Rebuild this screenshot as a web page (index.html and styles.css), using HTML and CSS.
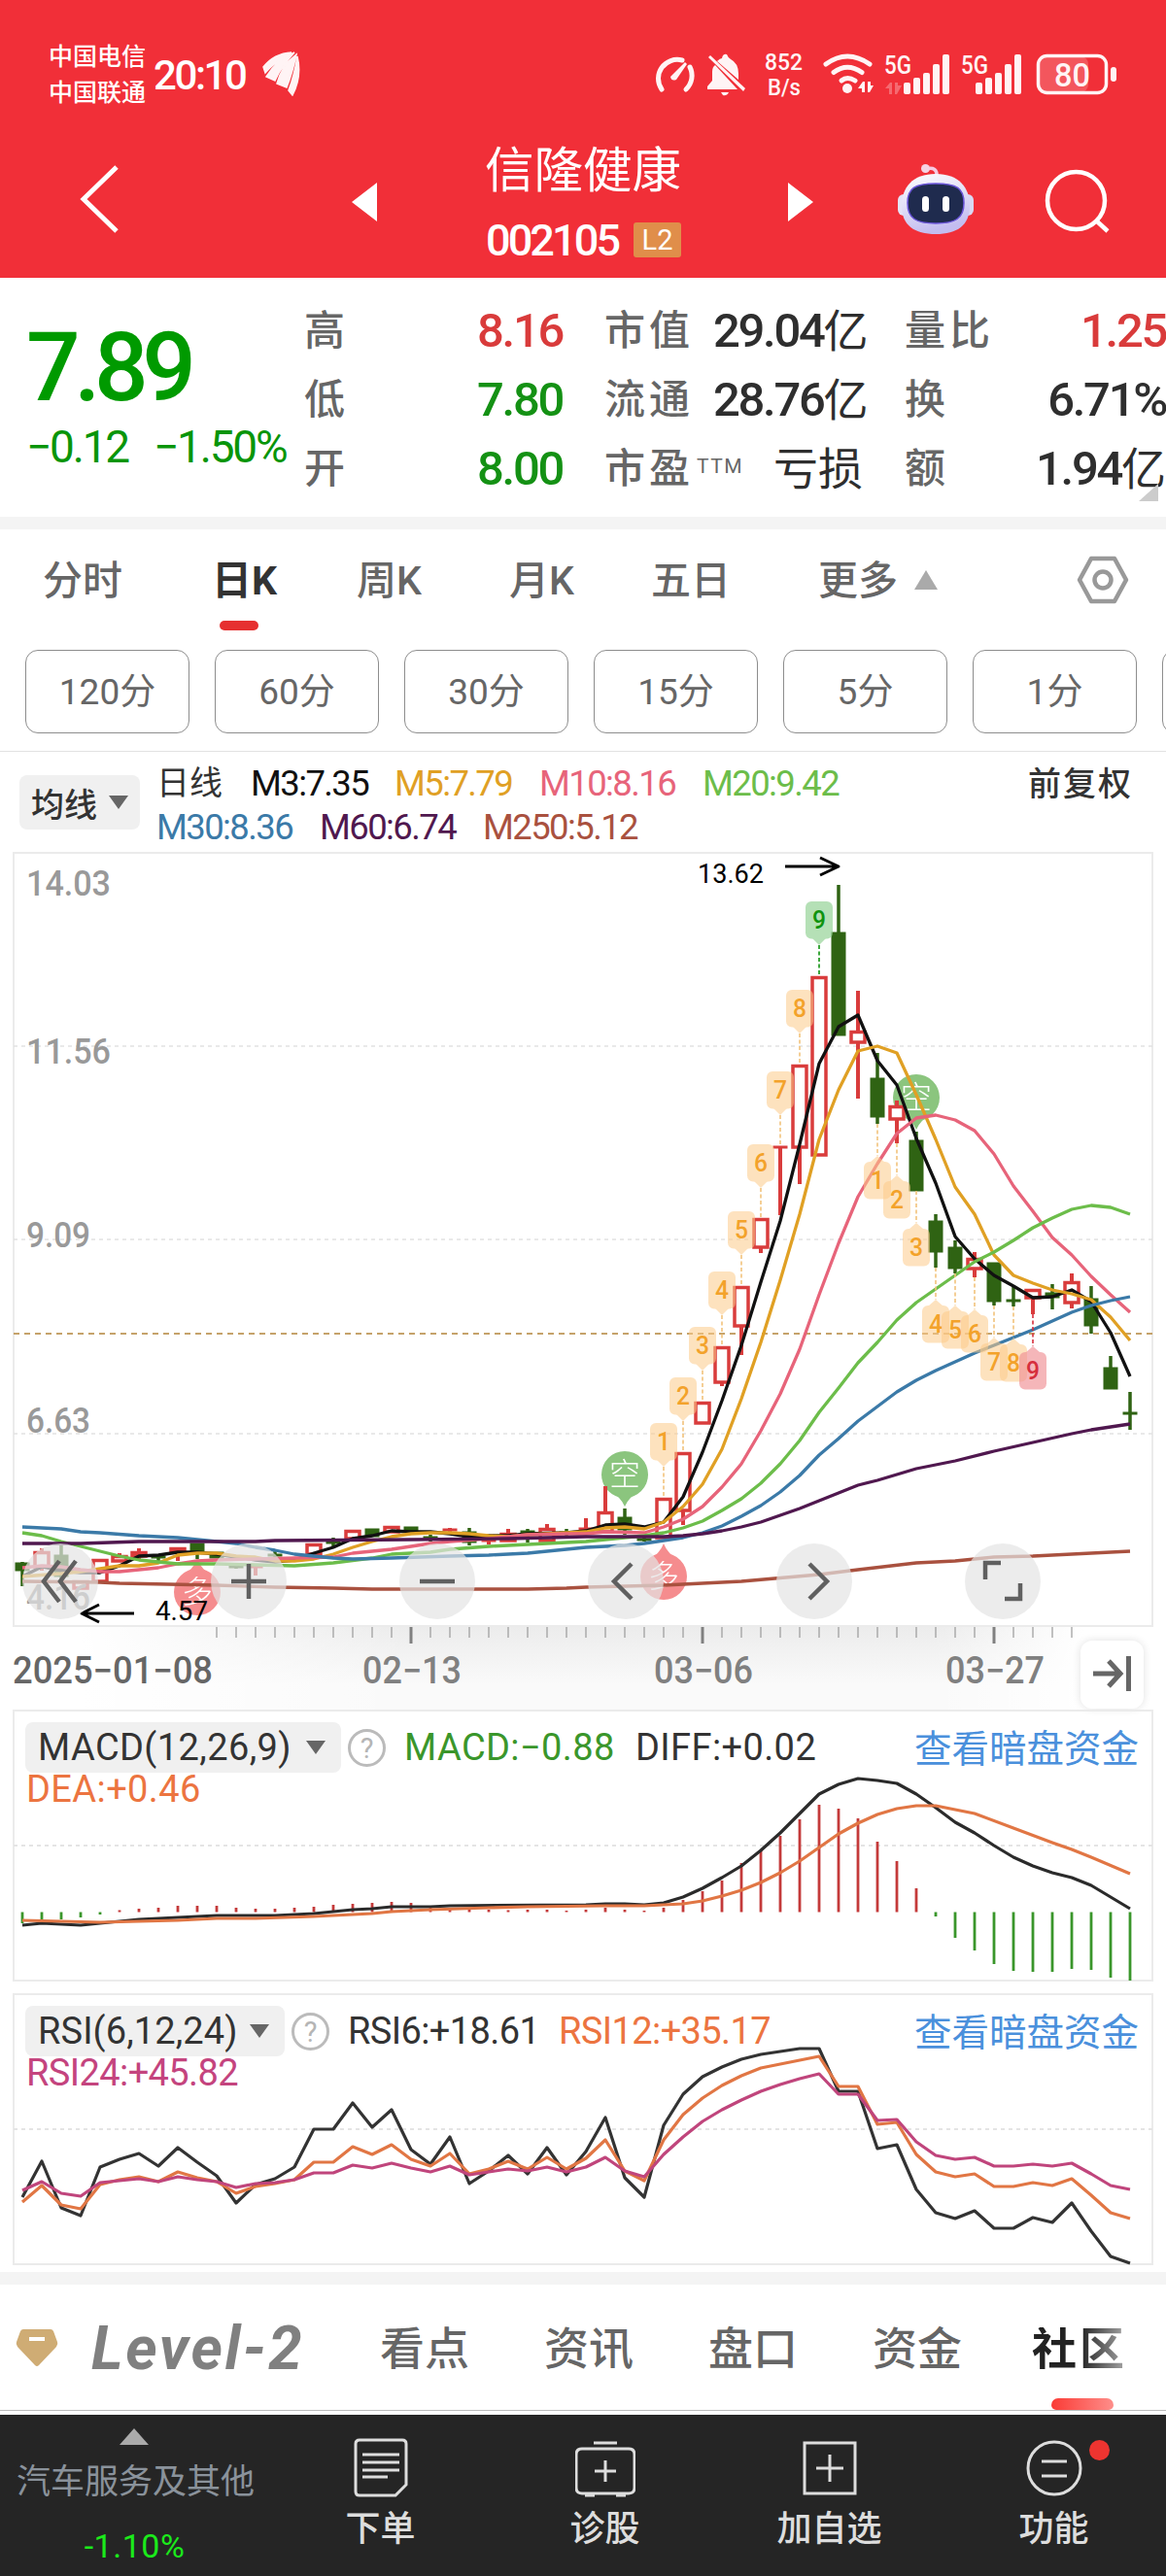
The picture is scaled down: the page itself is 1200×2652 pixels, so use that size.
FILE: index.html
```html
<!DOCTYPE html>
<html lang="zh-CN">
<head>
<meta charset="utf-8">
<title>信隆健康 002105</title>
<link rel="stylesheet" href="styles.css">
</head>
<body>
<header class="top">
  <div class="status">
    <div class="carriers"><span>中国电信</span><span>中国联通</span></div>
    <span class="clock">20:10</span>
    <svg class="brand" width="40" height="46" viewBox="271 54 40 46" fill="#fff4f5"><path d="M272 70Q283 56 301 55Q284 64 274 76ZM275 80Q286 62 304 55Q290 70 284 84ZM286 87Q291 68 306 57Q302 76 296 91ZM298 94Q304 78 307 59Q312 80 302 99Z" stroke="#fff4f5" stroke-width="1.500"/></svg>
    <svg class="sys" width="500" height="60" viewBox="660 46 500 60">
      <g fill="none" stroke="#fff4f5" stroke-width="5" stroke-linecap="round">
        <path d="M681 92A19.500 19.500 0 0 1 702 62M710 69A19.500 19.500 0 0 1 706 92"/>
        <path d="M850 66Q872 50 895 66M858 74.500Q872 64 887 74.500"/>
        <path d="M866 83Q872 78 880 83"/>
      </g>
      <g fill="#fff4f5">
        <path d="M690 79L705 64L707 66L696 82Q691 84 690 79Z"/>
        <path d="M728 92V89L733 83V74Q733 69 736 67L759 92ZM738 63Q741 60 743 60Q744 55 748 56Q749 59 752 61Q760 65 760 76V82ZM742 95H750Q748 99 744 98Z"/>
        <path d="M729 59L731 57L767 91L765 94Z"/>
        <circle cx="872" cy="91" r="5"/>
        <path d="M883 91L888 84H890V95H887V91ZM893 84H896V88H899L895 95H893Z"/>
        <rect x="930" y="85" width="7" height="12" rx="2"/><rect x="940" y="80" width="7" height="17" rx="2"/><rect x="950" y="75" width="7" height="22" rx="2"/><rect x="960" y="66" width="7" height="31" rx="2"/><rect x="970" y="56" width="7" height="41" rx="2"/>
        <rect x="1004" y="85" width="7" height="12" rx="2"/><rect x="1014" y="80" width="7" height="17" rx="2"/><rect x="1024" y="75" width="7" height="22" rx="2"/><rect x="1034" y="66" width="7" height="31" rx="2"/><rect x="1044" y="56" width="7" height="41" rx="2"/>
        <path d="M911 91L916 85H918V97H915V91ZM921 85H924V88H928L923 97H921Z" opacity=".3"/>
        <rect x="1069" y="58" width="51" height="37" rx="8" opacity=".2"/>
        <rect x="1143" y="69" width="6" height="15" rx="3"/>
      </g>
      <rect x="1068.500" y="57.500" width="70" height="38" rx="9" fill="none" stroke="#fff4f5" stroke-width="3.500"/>
      <g class="sys-text">
        <text x="787" y="72" font-size="24" textLength="39" lengthAdjust="spacingAndGlyphs">852</text>
        <text x="790" y="98" font-size="24" textLength="34" lengthAdjust="spacingAndGlyphs">B/s</text>
        <text x="910" y="76" font-size="26" textLength="28" lengthAdjust="spacingAndGlyphs">5G</text>
        <text x="989" y="76" font-size="26" textLength="28" lengthAdjust="spacingAndGlyphs">5G</text>
        <text x="1085" y="89" font-size="34" textLength="37" lengthAdjust="spacingAndGlyphs">80</text>
      </g>
    </svg>
  </div>
  <div class="nav">
    <svg class="back" width="46" height="76" viewBox="80 168 46 76" fill="none" stroke="#fff" stroke-width="5"><path d="M120 173L86 206L120 239"/></svg>
    <svg class="prev" width="26" height="40" viewBox="0 0 26 40"><path d="M26 0V40L0 20Z" fill="#fff"/></svg>
    <div class="name">
      <h1>信隆健康</h1>
      <div class="code"><span>002105</span><b>L2</b></div>
    </div>
    <svg class="next" width="26" height="40" viewBox="0 0 26 40"><path d="M0 0V40L26 20Z" fill="#fff"/></svg>
    <svg class="robot" width="80" height="74" viewBox="923 168 80 74">
      <defs><linearGradient id="shell" x1="0" y1="0" x2="0.300" y2="1"><stop offset="0" stop-color="#fff"/><stop offset=".6" stop-color="#dcd9f5"/><stop offset="1" stop-color="#c3bdf0"/></linearGradient></defs>
      <path d="M953 174Q965 171 964 182" fill="none" stroke="#f6c9e0" stroke-width="3.500"/>
      <circle cx="952.500" cy="173.500" r="4.500" fill="#f5d3e4"/>
      <rect x="924" y="200" width="14" height="22" rx="6" fill="#e4e3f7"/><rect x="988" y="200" width="14" height="22" rx="6" fill="#d9d8f3"/>
      <path d="M963 179C987 179 998 193 998 212C998 232 985 241 963 241C941 241 928 232 928 212C928 193 939 179 963 179Z" fill="url(#shell)"/>
      <path d="M963 189C985 189 992 194 992 209C992 225 983 230 963 230C943 230 934 225 934 209C934 194 941 189 963 189Z" fill="#1f2b4e" stroke="#6a55d8" stroke-width="1.500"/>
      <rect x="949" y="202" width="7" height="16" rx="3.500" fill="#fff"/><rect x="970" y="202" width="7" height="16" rx="3.500" fill="#fff"/>
    </svg>
    <svg class="search" width="68" height="68" viewBox="1074 174 68 68" fill="none" stroke="#fff" stroke-width="4.500"><circle cx="1107.500" cy="206.500" r="29.500"/><path d="M1128 227L1140 238"/></svg>
  </div>
</header>

<section class="quote">
  <div class="price">
    <strong>7.89</strong>
    <div class="change"><span>−0.12</span><span>−1.50%</span></div>
  </div>
  <dl class="stats">
    <dt>高</dt><dd class="up">8.16</dd><dt>市值</dt><dd>29.04<i>亿</i></dd><dt>量比</dt><dd class="up">1.25</dd>
    <dt>低</dt><dd class="down">7.80</dd><dt>流通</dt><dd>28.76<i>亿</i></dd><dt>换</dt><dd>6.71%</dd>
    <dt>开</dt><dd class="down">8.00</dd><dt>市盈<sup>TTM</sup></dt><dd><i>亏损</i></dd><dt>额</dt><dd>1.94<i>亿</i></dd>
  </dl>
  <span class="corner"></span>
</section>

<nav class="tabs">
  <span>分时</span><span class="active">日K</span><span>周K</span><span>月K</span><span>五日</span><span class="more">更多<svg width="24" height="20"><path d="M12 0L24 20H0Z" fill="#aaa"/></svg></span>
  <svg class="hex" width="54" height="54" viewBox="1108 570 54 54" fill="none" stroke="#999" stroke-width="4.500" stroke-linejoin="round"><path d="M1123 575H1147L1159 597L1147 619H1123L1111 597Z"/><circle cx="1135" cy="597" r="8.500"/></svg>
</nav>
<div class="periods"><span>120分</span><span>60分</span><span>30分</span><span>15分</span><span>5分</span><span>1分</span><span></span></div>

<section class="legend">
  <button class="chip ma">均线<i></i></button>
  <div class="lines">
    <p><span class="day">日线</span><span class="c3">M3:7.35</span><span class="c5">M5:7.79</span><span class="c10">M10:8.16</span><span class="c20">M20:9.42</span></p>
    <p><span class="c30">M30:8.36</span><span class="c60">M60:6.74</span><span class="c250">M250:5.12</span></p>
  </div>
  <span class="adjust">前复权</span>
</section>

<section class="kline">
  <svg id="kline" width="1200" height="800" viewBox="0 876 1200 800"></svg>
  <div class="tools">
    <span><svg viewBox="-39 -39 78 78"><path d="M-1 -21L-17 0L-1 21M16 -21L0 0L16 21"/></svg></span>
    <span><svg viewBox="-39 -39 78 78"><path d="M-18 0H18M0 -18V18"/></svg></span>
    <span><svg viewBox="-39 -39 78 78"><path d="M-18 0H18"/></svg></span>
    <span><svg viewBox="-39 -39 78 78"><path d="M6 -18L-12 0L6 18"/></svg></span>
    <span><svg viewBox="-39 -39 78 78"><path d="M-5 -18L13 0L-5 18"/></svg></span>
    <span><svg viewBox="-39 -39 78 78"><path d="M-2 -19H-18V-2M2 18H18V2"/></svg></span>
  </div>
</section>

<section class="axis">
  <svg id="axis" width="1200" height="85" viewBox="0 1675 1200 85"></svg>
  <span class="latest"><svg width="64" height="68" viewBox="1112 1690 64 68" fill="none" stroke="#666" stroke-width="5"><path d="M1125 1724H1152M1141 1711L1153 1724L1141 1737M1161.500 1706V1742"/></svg></span>
</section>

<section class="panel macd">
  <svg class="plot" id="macd" width="1174" height="280" viewBox="13 1760 1174 280"></svg>
  <div class="head">
    <button class="chip">MACD(12,26,9)<i></i></button><em>?</em>
    <span class="green">MACD:−0.88</span><span>DIFF:+0.02</span><a>查看暗盘资金</a>
  </div>
  <p class="orange">DEA:+0.46</p>
</section>
<section class="panel rsi">
  <svg class="plot" id="rsi" width="1174" height="280" viewBox="13 2052 1174 280"></svg>
  <div class="head">
    <button class="chip">RSI(6,12,24)<i></i></button><em>?</em>
    <span>RSI6:+18.61</span><span class="orange">RSI12:+35.17</span><a>查看暗盘资金</a>
  </div>
  <p class="magenta">RSI24:+45.82</p>
</section>

<nav class="info">
  <svg class="gem" width="44" height="40" viewBox="0 0 44 40"><path d="M8 1H36Q38 1 39 3L43 14Q44 16 42 19L24 38Q22 40 20 38L2 19Q0 16 1 14L5 3Q6 1 8 1Z" fill="#cfac74"/><rect x="14" y="9" width="16" height="4" fill="#fff"/></svg>
  <span class="level">Level-2</span><span>看点</span><span>资讯</span><span>盘口</span><span>资金</span><span class="current">社区</span>
</nav>

<footer class="dock">
  <div class="sector"><svg width="30" height="17"><path d="M15 0L30 17H0Z" fill="#aaa"/></svg><span>汽车服务及其他</span><b>-1.10%</b></div>
  <div class="act order"><svg viewBox="-31 -31 62 62"><path d="M-22 -29H22Q26 -29 26 -25V17L15 28H-22Q-26 28 -26 24V-25Q-26 -29 -22 -29ZM-19 -14H19M-19 -6H19M-19 2H19M-19 9H7"/></svg>下单</div>
  <div class="act diag"><svg viewBox="-31 -31 62 62"><path d="M-24 -20H24Q30 -20 30 -14V20Q30 26 24 26H-24Q-30 26 -30 20V-14Q-30 -20 -24 -20ZM-12 -26H12M-11 3H11M0 -8V14M-21 28H-11M11 28H21"/></svg>诊股</div>
  <div class="act add"><svg viewBox="-31 -31 62 62"><path d="M-26 -26H26V26H-26ZM-14 0H14M0 -14V14"/></svg>加自选</div>
  <div class="act func"><svg viewBox="-31 -31 62 62"><path d="M-13 -7H13M-13 8H13"/><circle r="27"/></svg>功能<i></i></div>
</footer>
<script src="chart.js"></script>
</body>
</html>
```
FILE: styles.css
```css
* { box-sizing: border-box; margin: 0; padding: 0; }
body { width: 1200px; height: 2652px; overflow: hidden; background: #fff; color: #333; font-family: Roboto, "Noto Sans CJK SC", sans-serif; display: flex; flex-direction: column; }
i, em { font-style: normal; }
svg { flex: none; }
header, section, nav, footer, .periods { flex: none; }
text { font-family: Roboto, "Noto Sans CJK SC", sans-serif; }

.top { height: 286px; background: #f12f38; color: #fff; }
.status { height: 130px; padding: 40px 0 0 50px; display: flex; align-items: flex-start; }
.carriers { display: flex; flex-direction: column; width: 108px; font-size: 25px; font-weight: 500; line-height: 37px; }
.clock { width: 112px; font-size: 42px; font-weight: 500; line-height: 48px; padding-top: 14px; letter-spacing: -2.4px; }
.brand { margin-top: 13px; }
.sys { margin: 6px 0 0 350px; }
.sys-text { fill: #fff4f5; font-weight: 500; }
.nav { display: flex; align-items: flex-start; height: 156px; }
.back { margin: 37px 0 0 80px; }
.prev { margin: 58px 0 0 236px; }
.name { width: 202px; margin: 16px 0 0 111px; }
.name h1 { font-size: 50.5px; font-weight: 400; line-height: 60px; white-space: nowrap; }
.code { display: flex; align-items: center; justify-content: space-between; margin-top: 16px; height: 50px; padding-left: 1px; }
.code span { font-size: 45px; font-weight: 500; letter-spacing: -2.9px; }
.code b { width: 49px; height: 36px; border-radius: 3px; background: #e08e4a; font-size: 29px; font-weight: 400; line-height: 36px; text-align: center; }
.next { margin: 58px 0 0 110px; }
.robot { margin: 38px 0 0 86px; }
.search { margin: 44px 0 0 71px; }

.quote { height: 259px; border-bottom: 13px solid #f4f4f4; display: flex; position: relative; }
.price { width: 313px; padding-left: 27px; color: #099509; white-space: nowrap; }
.price strong { display: block; font-size: 98px; font-weight: 500; line-height: 110px; margin-top: 38px; letter-spacing: -6.5px; color: #009a00; }
.change { display: flex; font-size: 46px; line-height: 54px; letter-spacing: -2.2px; margin-top: -1px; }
.change span:first-child { width: 131px; }
.stats { display: grid; grid-template-columns: 84px 182px 155px 154px 110px 202px; grid-template-rows: 71px 71px 71px; padding-top: 19px; line-height: 71px; }
.stats dt { font-size: 42px; font-weight: 500; color: #666; white-space: nowrap; letter-spacing: 4px; }
.stats dt:nth-of-type(3n+2), .stats dt:nth-of-type(3n) { padding-left: 43px; }
.stats dt sup { font-size: 21px; font-weight: 400; vertical-align: 10px; line-height: 0; margin-left: 3px; letter-spacing: 1.5px; }
.stats dd { font-size: 49px; font-weight: 500; letter-spacing: -2.3px; text-align: right; white-space: nowrap; color: #2e2e2e; }
.stats dd i { font-size: 46px; font-weight: 400; letter-spacing: 0; }
.stats .up { color: #d93b3b; }
.stats .down { color: #149114; }
.corner { position: absolute; right: 8px; bottom: 16px; border: solid transparent; border-width: 0 0 18px 20px; border-bottom-color: #ccc; }

.tabs { height: 124px; display: flex; align-items: flex-start; padding: 25px 0 0 44px; font-size: 41px; font-weight: 500; line-height: 56px; color: #666; }
.tabs span { height: 79px; white-space: nowrap; }
.tabs span:nth-child(1) { width: 174px; }
.tabs span:nth-child(2) { width: 149px; position: relative; font-weight: 700; color: #333; }
.tabs span:nth-child(3) { width: 157px; }
.tabs span:nth-child(4) { width: 146px; }
.tabs span:nth-child(5) { width: 172px; }
.tabs .more { width: 266px; display: flex; gap: 17px; }
.more svg { margin-top: 17px; }
.tabs .active::after { content: ""; position: absolute; left: 8px; top: 69px; width: 40px; height: 10px; border-radius: 5px; background: #e63030; }
.periods { height: 105px; border-bottom: 1px solid #e2e2e2; padding-left: 26px; display: flex; gap: 26px; overflow: hidden; }
.periods span { flex: 0 0 169px; height: 86px; border: 1px solid #8d8d8d; border-radius: 13px; font-size: 37px; line-height: 85px; text-align: center; color: #666; }

.legend { height: 102px; display: flex; align-items: flex-start; padding-left: 20px; }
.chip { display: flex; align-items: center; border: 0; border-radius: 8px; background: #f0f0f0; color: #333; font-family: inherit; white-space: nowrap; }
.chip i { margin-left: auto; border: 10px solid transparent; border-top: 14px solid #666; border-bottom: 0; }
.ma { width: 124px; height: 56px; margin-top: 24px; padding: 0 12px; font-size: 34px; font-weight: 500; }
.lines { width: 914px; padding: 10px 0 0 17px; font-size: 36.5px; line-height: 45px; letter-spacing: -1.6px; }
.lines p { display: flex; gap: 28px; }
.lines p + p span { width: 140px; }
.lines p + p .c250 { width: 160px; }
.lines .day { width: 71px; font-size: 34px; letter-spacing: 0; }
.c3 { width: 120px; } .c5 { width: 121px; }
.c10, .c20 { width: 140px; }
.c3 { color: #111; } .c5 { color: #e0a024; } .c10 { color: #e7647a; } .c20 { color: #6cbd4a; }
.c30 { color: #3b7aa8; } .c60 { color: #50184f; } .c250 { color: #a9513f; }
.legend .lines .c3 { margin-left: -2px; }
.adjust { font-size: 34px; font-weight: 500; line-height: 56px; margin-top: 5px; white-space: nowrap; letter-spacing: 2px; }

.kline { height: 799px; position: relative; }
.kline > svg { display: block; }
.tools { position: absolute; left: 23px; top: 713px; display: flex; gap: 116px; }
.tools span { width: 78px; height: 78px; border-radius: 39px; background: rgba(228,228,228,.7); }
.tools svg { display: block; fill: none; stroke: #606060; stroke-width: 4.5; }
.axis { height: 85px; position: relative; background: linear-gradient(90deg, #fff 7%, rgba(255,255,255,0) 35%, rgba(255,255,255,0) 80%, #fff 93%), linear-gradient(#ececec, #fafafa 70%); }
.latest { position: absolute; left: 1112px; top: 14px; width: 65px; height: 70px; border-radius: 12px; background: #fff; box-shadow: 0 0 8px rgba(0,0,0,.12); }

.panel { position: relative; width: 1174px; height: 280px; margin-left: 13px; border: 2px solid #ebebeb; font-size: 38px; }
.macd { margin-bottom: 12px; letter-spacing: .4px; }
.rsi { letter-spacing: -.6px; }
.plot { position: absolute; left: -2px; top: -2px; }
.head { position: relative; display: flex; align-items: center; padding: 11px 13px 0 11px; height: 63px; }
.head .chip { width: 325px; height: 52px; padding: 0 16px 0 13px; font-size: 38px; letter-spacing: .4px; }
.head em { width: 39px; height: 39px; margin: 0 19px 0 7px; border: 3px solid #bbb; border-radius: 50%; color: #b5b5b5; font-size: 29px; line-height: 34px; text-align: center; letter-spacing: 0; }
.head span { white-space: nowrap; }
.head span:nth-of-type(1) { width: 238px; }
.rsi .head .chip { width: 267px; letter-spacing: .1px; }
.rsi .head span:nth-of-type(1) { width: 217px; }
.head a { margin-left: auto; margin-top: -4px; font-size: 38.5px; letter-spacing: 0; color: #4a90dc; }
.panel p { position: relative; padding-left: 12px; line-height: 40px; margin-top: -3px; }
.green { color: #3a962b; } .orange { color: #ec7440; } .magenta { color: #c4447e; }

.info { height: 147px; border-top: 13px solid #f4f4f4; margin-top: 7px; display: flex; align-items: flex-start; padding: 45px 0 0 16px; color: #666; font-size: 46px; font-weight: 500; line-height: 44px; box-shadow: inset 0 -4px 0 #fff, inset 0 -5px 0 #bbb; }
.info span { width: 169px; margin-top: -1px; white-space: nowrap; }
.info .level { width: 331px; padding-left: 34px; color: #808080; font-size: 62px; font-style: italic; font-weight: 700; letter-spacing: 2.6px; }
.info .current { position: relative; width: 110px; margin-left: -5px; font-weight: 700; background: linear-gradient(90deg, #222 45%, #ccc); background-clip: text; color: transparent; letter-spacing: 3px; }
.info .current::after { content: ""; position: absolute; left: 20px; top: 73px; width: 64px; height: 12px; border-radius: 7px 7px 5px 5px; background: linear-gradient(90deg, #fa3b36, #fe8e8a); }

.dock { height: 166px; background: #252525; display: flex; color: #ddd; }
.sector { width: 276px; padding: 14px 0 0 17px; display: flex; flex-direction: column; align-items: center; color: #8a929b; font-size: 35px; line-height: 44px; white-space: nowrap; }
.sector span { margin-top: 17px; width: 245px; margin-left: -14px; }
.sector b { margin-top: 21px; margin-left: -16px; color: #1bea1b; font-size: 34px; font-weight: 400; line-height: 44px; letter-spacing: .5px; }
.sector svg { margin-left: -18px; }
.act { position: relative; width: 231px; padding-top: 24px; display: flex; flex-direction: column; align-items: center; font-size: 36px; font-weight: 500; line-height: 56px; }
.act svg { width: 62px; height: 62px; margin-bottom: 4px; fill: none; stroke: #ddd; stroke-width: 3; }
.act i { position: absolute; right: 58px; top: 26px; width: 21px; height: 21px; border-radius: 50%; background: #ee3430; }
```
FILE: chart.js
```js
const FIRST_X = 23, STEP = 20;
const RED = '#d93c3c', GREEN = '#2f6313';

const tag = (name, attrs, body = '') =>
  `<${name} ${Object.entries(attrs).map(([k, v]) => `${k}="${v}"`).join(' ')}>${body}</${name}>`;
const line = (x1, y1, x2, y2, stroke, width, dash) =>
  tag('line', { x1, y1, x2, y2, stroke, 'stroke-width': width, 'stroke-dasharray': dash || 'none' });
const path = (d, stroke, width) =>
  tag('path', { d, stroke, fill: 'none', 'stroke-width': width, 'stroke-linejoin': 'round' });
const label = (x, y, size, fill, len, body, weight = 400) =>
  tag('text', { x, y, 'font-size': size, fill, textLength: len, lengthAdjust: 'spacingAndGlyphs', 'font-weight': weight }, body);
const pairs = (text) => 'M' + text.trim().split(/\s+/).join('L');
const series = (ys) => 'M' + ys.map((y, i) => `${FIRST_X + STEP * i},${y}`).join('L');

/* candles: x, high, low, body top, body bottom, rising */
const candles = [
  [23,1608,1633,1609,1617,0],[43,1594,1617,1598,1613,1],[63,1591,1625,1601,1623,0],[83,1627,1636,1628,1635,1],
  [103,1606,1629,1606,1628,1],[123,1599,1608,1602,1607,1],[143,1594,1606,1598,1602,1],[163,1602,1607,1602,1604,0],
  [183,1593,1607,1594,1598,1],[203,1589,1605,1589,1597,0],[223,1598,1604,1598,1604,0],[243,1610,1615,1612,1614,0],
  [263,1611,1622,1612,1614,1],[283,1596,1604,1600,1602,0],[303,1605,1608,1605,1607,1],[323,1589,1606,1590,1600,1],
  [343,1583,1593,1587,1589,0],[363,1575,1585,1576,1584,1],[383,1574,1582,1574,1582,0],[403,1571,1578,1572,1577,1],
  [423,1572,1576,1572,1576,0],[443,1580,1587,1582,1584,0],[463,1573,1577,1574,1576,1],[483,1573,1591,1577,1588,0],
  [503,1583,1590,1585,1587,1],[523,1574,1587,1579,1586,1],[543,1574,1588,1576,1578,0],[563,1569,1587,1574,1586,1],
  [583,1574,1581,1577,1579,0],[603,1563,1578,1573,1576,1],[623,1530,1577,1557,1577,1],[643,1553,1580,1562,1575,0],
  [663,1583,1587,1584,1586,0],[683,1542,1583,1543,1583,1],[703,1495,1570,1496,1555,1],[723,1443,1466,1444,1465,1],
  [743,1386,1427,1387,1423,1],[763,1324,1395,1325,1365,1],[783,1254,1290,1255,1284,1],[803,1180,1251,1180,1182,1],
  [823,1096,1219,1097,1181,1],[843,1005,1190,1006,1189,1],[863,911,1066,960,1066,0],[883,1020,1131,1062,1073,1],
  [903,1084,1157,1110,1150,0],[923,1133,1177,1139,1152,1],[943,1165,1226,1174,1226,0],[963,1250,1305,1257,1289,0],
  [983,1277,1311,1284,1306,0],[1003,1289,1315,1296,1306,1],[1023,1300,1344,1300,1340,0],[1043,1325,1345,1338,1340,0],
  [1063,1327,1353,1328,1336,1],[1083,1322,1348,1331,1336,0],[1103,1311,1347,1320,1341,1],[1123,1324,1373,1337,1365,0],
  [1143,1396,1430,1408,1430,0],[1163,1433,1472,1454,1456,0]
];

const averages = [
  ['#a9513f', '23,1628 103,1629 123,1630 223,1632 283,1634 343,1635 383,1636 543,1636 583,1635 603,1634 683,1632 763,1628 843,1621 883,1616 943,1609 983,1607 1023,1603 1063,1602 1163,1597'],
  ['#111', '23,1623 43,1613 63,1617 83,1619 103,1619 123,1612 143,1602 163,1601 183,1598 203,1598 223,1600 243,1603 263,1606 283,1608 303,1606 323,1599 343,1593 363,1584 383,1581 403,1576 423,1577 443,1577 463,1579 483,1582 503,1581 523,1581 543,1579 583,1578 603,1576 623,1570 643,1569 663,1572 683,1567 703,1541 723,1495 743,1442 763,1385 783,1320 803,1257 823,1178 843,1095 863,1057 883,1045 903,1092 923,1117 943,1172 963,1218 983,1273 1003,1296 1023,1313 1043,1324 1063,1336 1083,1335 1103,1328 1123,1340 1143,1372 1163,1417'],
  ['#e0a024', '23,1623 63,1620 83,1618 103,1615 123,1612 143,1612 163,1609 183,1601 203,1599 223,1599 243,1602 263,1603 283,1607 303,1607 323,1605 343,1600 363,1593 383,1587 403,1582 423,1579 443,1578 463,1578 483,1579 503,1581 523,1582 543,1580 583,1578 603,1577 623,1573 643,1572 663,1574 683,1567 703,1551 723,1528 743,1492 763,1440 783,1382 803,1318 823,1250 843,1173 863,1122 883,1082 903,1077 923,1084 943,1127 963,1173 983,1222 1003,1250 1023,1292 1043,1313 1063,1321 1083,1328 1103,1332 1123,1338 1143,1356 1163,1380'],
  ['#e7647a', '23,1614 43,1612 63,1613 83,1616 103,1618 123,1618 143,1616 163,1614 183,1610 203,1607 223,1606 303,1604 343,1603 363,1599 383,1597 403,1595 423,1592 443,1589 463,1587 503,1584 543,1580 583,1579 603,1579 623,1577 663,1578 683,1572 703,1564 723,1551 743,1531 763,1507 783,1473 803,1435 823,1389 843,1333 863,1280 883,1232 903,1198 923,1167 943,1151 963,1148 983,1153 1003,1164 1023,1188 1043,1221 1063,1247 1083,1274 1103,1292 1123,1314 1143,1333 1163,1351'],
  ['#6cbd4a', '23,1578 43,1581 63,1587 83,1592 103,1597 123,1602 143,1606 163,1608 183,1610 223,1610 263,1611 303,1612 343,1609 383,1604 403,1600 443,1598 463,1595 503,1592 563,1589 603,1587 643,1583 663,1581 683,1578 703,1573 723,1566 743,1555 763,1543 783,1527 803,1507 823,1483 843,1454 863,1429 883,1403 903,1382 923,1359 943,1341 963,1327 983,1313 1003,1299 1023,1289 1043,1277 1063,1264 1083,1254 1103,1245 1123,1241 1143,1243 1163,1250'],
  ['#3b7aa8', '23,1572 63,1574 83,1577 103,1578 143,1581 183,1583 223,1587 243,1589 263,1593 283,1596 303,1600 323,1602 343,1604 363,1605 403,1604 463,1602 503,1601 543,1599 563,1597 603,1593 643,1591 663,1589 683,1586 703,1583 723,1578 743,1571 763,1561 783,1550 803,1536 823,1519 843,1498 863,1481 883,1463 903,1448 923,1433 943,1421 963,1411 983,1402 1003,1393 1023,1385 1043,1377 1063,1369 1083,1360 1103,1351 1123,1344 1143,1339 1163,1335'],
  ['#50184f', '23,1589 83,1589 143,1587 263,1587 283,1586 423,1585 523,1584 603,1582 683,1582 703,1581 723,1579 743,1576 763,1572 783,1567 803,1560 823,1553 843,1545 863,1537 883,1529 903,1524 943,1512 983,1504 1023,1494 1063,1485 1103,1476 1123,1472 1163,1466']
];

/* sequence badges: number, x, box top, candle edge, pointing down */
const badges = [
  [1,683,1465,1542,1],[2,703,1418,1495,1],[3,723,1366,1443,1],[4,743,1309,1386,1],[5,763,1247,1324,1],[6,783,1178,1255,1],
  [7,803,1103,1180,1],[8,823,1019,1096,1],[9,843,928,1005,1],
  [1,903,1196,1157,0],[2,923,1216,1177,0],[3,943,1265,1226,0],[4,963,1344,1305,0],[5,983,1350,1311,0],[6,1003,1354,1315,0],
  [7,1023,1383,1344,0],[8,1043,1384,1345,0],[9,1063,1392,1353,0]
];

function candle([x, hi, lo, top, bottom, rising]) {
  const color = rising ? RED : GREEN;
  let out = '';
  if (!rising || bottom - top < 4) {
    out += line(x, hi, x, lo, color, rising ? 4 : 3.5);
    return out + tag('rect', { x: x - 7.5, y: top - 0.5, width: 15, height: bottom - top + 1, fill: color });
  }
  if (hi < top) out += line(x, hi, x, top, color, 4);
  if (lo > bottom) out += line(x, bottom, x, lo, color, 4);
  return out + tag('rect', { x: x - 7, y: top + 0.5, width: 14, height: bottom - top - 0.5, fill: '#fff', stroke: color, 'stroke-width': 3.5 });
}

function badge([n, x, top, edge, down]) {
  const [bg, fg] = n === 9 ? (down ? ['#8fd090', '#0f930f'] : ['#f09095', '#d62f3d']) : ['#fdcb8a', '#f3a22b'];
  const tip = down ? `M${x - 7},${top + 38}h14l-7,7z` : `M${x - 7},${top}h14l-7,-6z`;
  const dash = n === 9 ? fg : '#f2c37c';
  return line(x, down ? top + 45 : edge, x, down ? edge : top - 6, dash, 1.6, '4 2.5') +
    tag('g', { opacity: n === 9 ? 0.65 : 0.55, fill: bg }, tag('rect', { x: x - 14, y: top, width: 28, height: 38.5, rx: 6 }) + tag('path', { d: tip })) +
    label(x - 7, top + 28, 26, fg, 14, n, 500);
}

function pin(x, y, up, text) {
  const color = up ? '#f4797b' : '#77bb68';
  const tip = up ? `M${x - 17},${y - 16}Q${x - 4},${y - 23} ${x},${y - 34}Q${x + 4},${y - 23} ${x + 17},${y - 16}Z`
    : `M${x - 17},${y + 16}Q${x - 4},${y + 23} ${x},${y + 33}Q${x + 4},${y + 23} ${x + 17},${y + 16}Z`;
  return tag('g', { opacity: 0.85 }, tag('circle', { cx: x, cy: y, r: 24, fill: color }) + tag('path', { d: tip, fill: color }) +
    label(x - 16, y + 11, 32, '#fff', 32, text, 300));
}

let k = tag('rect', { x: 14, y: 878, width: 1172, height: 796, fill: 'none', stroke: '#ebebeb', 'stroke-width': 2 });
[1077, 1276, 1476].forEach((y) => { k += line(14, y, 1186, y, '#e2e2e2', 1.5, '4 4'); });
k += pin(943, 1130, false, '空') + pin(643, 1518, false, '空') + pin(683, 1623, true, '多') + pin(203, 1639, true, '多');
k += line(14, 1373, 1186, 1373, '#c5a26a', 1.8, '6 5');
k += candles.map(candle).join('') + averages.map(([c, d]) => path(pairs(d), c, 3.3)).join('') + badges.map(badge).join('');
[[14.03, 922, 87], [11.56, 1095, 87], ['9.09', 1284, 66], [6.63, 1475, 66], [4.16, 1657, 66]]
  .forEach(([v, y, w]) => { k += label(27, y, 36, '#999', w, v, 500); });
k += label(718, 909, 28, '#000', 68, '13.62') + path('M808,892H862M844,883L863,892L844,901', '#000', 3);
k += label(160, 1668, 28, '#000', 54, '4.57') + path('M138,1661H86M102,1652L84,1661L102,1670', '#000', 3);
document.getElementById('kline').innerHTML = k;

let a = '';
for (let x = 223; x <= 1103; x += STEP) {
  const major = (x - 423) % 300 === 0;
  a += line(x, 1675, x, major ? 1692 : 1686, major ? '#808080' : '#999', major ? 3 : 1.2);
}
a += label(13, 1733, 38, '#666', 206, '2025−01−08', 500) + label(373, 1733, 38, '#808080', 102, '02−13', 500)
  + label(673, 1733, 38, '#808080', 102, '03−06', 500) + label(973, 1733, 38, '#808080', 102, '03−27', 500);
document.getElementById('axis').innerHTML = a;

const bars = [1980,1976,1976,1974,1971,1966.5,1965,1964,1962,1962,1962,1964,1965,1965,1964,1963,1961,1960,1959,1958,1959,1963,1964,1965,1966,1966.5,1966,1966,1967,1966,1964,1966,1967,1964,1956,1947,1936,1918,1905,1890,1873,1858,1862,1872,1896,1916,1944,1973,1995,2008,2022,2029,2030,2030,2027,2028,2036,2039];
let m = line(14, 1900, 1186, 1900, '#e4e4e4', 2, '4 4');
bars.forEach((y, i) => { const x = FIRST_X + STEP * i; m += line(x, 1968.5, x, y, y > 1968 ? '#3a962b' : '#c43a3a', 2.8); });
m += path(pairs('23,1982 43,1980 63,1981 83,1982 103,1980 123,1978 143,1976 183,1974 203,1973 223,1972 283,1972 323,1970 343,1968 363,1966 383,1965 403,1963 443,1963 463,1962 603,1961 623,1960 643,1960 663,1961 683,1959 703,1953 723,1944 743,1933 763,1921 783,1905 803,1887 823,1867 843,1847 863,1837 883,1831 903,1833 923,1836 943,1847 963,1861 983,1876 1003,1887 1023,1900 1043,1912 1063,1921 1083,1928 1103,1933 1123,1941 1143,1953 1163,1965'), '#2b2b2b', 3.2);
m += path(pairs('23,1977 63,1978 103,1979 143,1978 183,1977 223,1975 263,1975 323,1973 363,1971 383,1970 403,1968 443,1966 503,1964 543,1963 623,1962 663,1962 703,1960 723,1957 743,1952 763,1946 783,1938 803,1928 823,1916 843,1902 863,1888 883,1877 903,1868 923,1862 943,1859 963,1859 983,1863 1003,1867 1043,1882 1083,1897 1103,1904 1123,1912 1163,1929'), '#e17644', 3.2);
document.getElementById('macd').innerHTML = m;

let r = line(14, 2192, 1186, 2192, '#e4e4e4', 2, '4 4');
r += path(series([2262,2225,2273,2281,2231,2223,2217,2230,2211,2226,2240,2268,2249,2243,2231,2192,2192,2165,2190,2172,2213,2228,2200,2248,2235,2219,2238,2211,2239,2215,2180,2242,2262,2188,2156,2138,2128,2120,2115,2112,2109,2109,2153,2153,2212,2208,2254,2278,2284,2276,2294,2294,2283,2288,2268,2297,2323,2330]), '#333', 3.2);
r += path(series([2267,2250,2270,2274,2249,2244,2241,2246,2236,2242,2246,2258,2251,2248,2244,2226,2226,2210,2218,2208,2223,2230,2217,2238,2233,2225,2233,2221,2233,2222,2203,2235,2245,2203,2177,2160,2147,2137,2129,2125,2121,2117,2148,2148,2187,2185,2218,2236,2241,2238,2251,2251,2247,2250,2243,2260,2278,2284]), '#e17644', 3.2);
r += path(series([2255,2246,2258,2261,2247,2245,2243,2246,2241,2244,2246,2252,2248,2247,2244,2237,2237,2229,2232,2227,2232,2236,2230,2239,2236,2233,2235,2231,2236,2231,2221,2235,2241,2218,2200,2184,2172,2162,2153,2146,2140,2135,2156,2156,2183,2182,2205,2219,2223,2221,2230,2230,2228,2230,2227,2238,2250,2254]), '#c0457c', 3.2);
document.getElementById('rsi').innerHTML = r;
```
